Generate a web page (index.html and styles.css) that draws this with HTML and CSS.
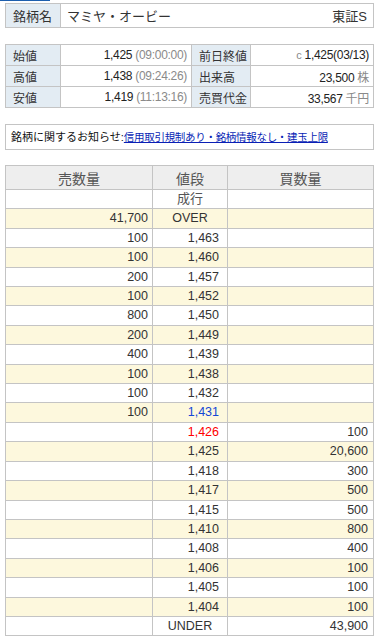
FILE: index.html
```html
<!DOCTYPE html>
<html lang="ja">
<head>
<meta charset="utf-8">
<title>板情報</title>
<link rel="stylesheet" href="styles.css">
</head>
<body>
<div class="page">
  <div class="tabbar"></div>
  <table class="name-table">
    <tr>
      <th class="lbl">銘柄名</th>
      <td class="name">マミヤ・オービー</td>
      <td class="market">東証S</td>
    </tr>
  </table>

  <table class="info-table">
    <tr>
      <th class="lbl">始値</th>
      <td class="val">1,425 <span class="sub">(09:00:00)</span></td>
      <th class="lbl">前日終値</th>
      <td class="val"><span class="sub c">c</span> 1,425(03/13)</td>
    </tr>
    <tr>
      <th class="lbl">高値</th>
      <td class="val">1,438 <span class="sub">(09:24:26)</span></td>
      <th class="lbl">出来高</th>
      <td class="val">23,500 <span class="sub">株</span></td>
    </tr>
    <tr>
      <th class="lbl">安値</th>
      <td class="val">1,419 <span class="sub">(11:13:16)</span></td>
      <th class="lbl">売買代金</th>
      <td class="val">33,567 <span class="sub">千円</span></td>
    </tr>
  </table>

  <div class="notice">銘柄に関するお知らせ:<a href="#" class="notice-link">信用取引規制あり・銘柄情報なし・建玉上限</a></div>

  <table class="board">
    <thead>
      <tr><th class="c-sell">売数量</th><th class="c-price">値段</th><th class="c-buy">買数量</th></tr>
    </thead>
    <tbody>
      <tr><td></td><td class="ctr gray">成行</td><td></td></tr>
      <tr class="y"><td>41,700</td><td class="ctr">OVER</td><td></td></tr>
      <tr><td>100</td><td>1,463</td><td></td></tr>
      <tr class="y"><td>100</td><td>1,460</td><td></td></tr>
      <tr><td>200</td><td>1,457</td><td></td></tr>
      <tr class="y"><td>100</td><td>1,452</td><td></td></tr>
      <tr><td>800</td><td>1,450</td><td></td></tr>
      <tr class="y"><td>200</td><td>1,449</td><td></td></tr>
      <tr><td>400</td><td>1,439</td><td></td></tr>
      <tr class="y"><td>100</td><td>1,438</td><td></td></tr>
      <tr><td>100</td><td>1,432</td><td></td></tr>
      <tr class="y"><td>100</td><td class="blue">1,431</td><td></td></tr>
      <tr><td></td><td class="red">1,426</td><td>100</td></tr>
      <tr class="y"><td></td><td>1,425</td><td>20,600</td></tr>
      <tr><td></td><td>1,418</td><td>300</td></tr>
      <tr class="y"><td></td><td>1,417</td><td>500</td></tr>
      <tr><td></td><td>1,415</td><td>500</td></tr>
      <tr class="y"><td></td><td>1,410</td><td>800</td></tr>
      <tr><td></td><td>1,408</td><td>400</td></tr>
      <tr class="y"><td></td><td>1,406</td><td>100</td></tr>
      <tr><td></td><td>1,405</td><td>100</td></tr>
      <tr class="y"><td></td><td>1,404</td><td>100</td></tr>
      <tr><td></td><td class="ctr">UNDER</td><td>43,900</td></tr>
    </tbody>
  </table>
</div>
</body>
</html>
```

FILE: styles.css
```css
html, body {
  margin: 0;
  padding: 0;
  background: #ffffff;
}
body {
  font-family: "Liberation Sans", "Noto Sans CJK JP", sans-serif;
  color: #333333;
  font-size: 12px;
}
.page {
  width: 369px;
  padding: 0 5px;
}
.tabbar {
  width: 50px;
  height: 1px;
  margin-left: -5px;
  margin-bottom: 2px;
  background: #1d5fae;
}
table {
  border-collapse: collapse;
  width: 369px;
  table-layout: fixed;
}
.lbl {
  background: #e3ecf3;
  font-weight: normal;
  text-align: left;
  color: #333;
  border: 1px solid #c4c4c4;
  padding: 0 0 0 7px;
}
.name-table td, .name-table th {
  height: 23px;
  padding-top: 0;
  padding-bottom: 0;
  font-size: 13px;
  border: 1px solid #c4c4c4;
}
.name-table .lbl { width: 47px; }
.name-table .name {
  border-right: none;
  padding-left: 6px;
  white-space: nowrap;
}
.name-table .market {
  border-left: none;
  text-align: right;
  padding-right: 6px;
  width: 60px;
}
.info-table {
  margin-top: 16px;
}
.info-table th, .info-table td {
  height: 20px;
  padding-top: 0;
  padding-bottom: 0;
  font-size: 12px;
  border: 1px solid #c4c4c4;
}
.info-table .val {
  text-align: right;
  padding-right: 4px;
  white-space: nowrap;
  color: #222;
  letter-spacing: -0.3px;
}
.info-table tr > :nth-child(1) { width: 47px; }
.info-table tr > :nth-child(2) { width: 125px; }
.info-table tr > :nth-child(3) { width: 51px; }
.sub { color: #8a8a8a; }
.c { font-size: 11px; }
.notice {
  margin-top: 16px;
  border: 1px solid #c4c4c4;
  height: 24px;
  line-height: 24px;
  padding-left: 5px;
  font-size: 11px;
  color: #111;
  white-space: nowrap;
}
.notice-link {
  color: #0a1fb5;
  text-decoration: underline;
  font-size: 10.5px;
  letter-spacing: -0.3px;
}
.board {
  margin-top: 15px;
}
.board th {
  background: #eeeeee;
  font-weight: normal;
  color: #555;
  font-size: 14px;
  height: 23px;
  padding: 0;
  border: 1px solid #c4c4c4;
}
.board .c-sell { width: 146px; }
.board .c-price { width: 74px; }
.board td {
  border: 1px solid #c4c4c4;
  height: 18.4px;
  line-height: 18.4px;
  padding: 0 5px 0 0;
  text-align: right;
  font-size: 12.5px;
  color: #333;
  white-space: nowrap;
}
.board td:nth-child(2) { padding-right: 8px; }
.board td:first-child { padding-right: 4px; }
.board tr.y td { background: #fdf8dd; }
.board td.ctr { text-align: center; padding-right: 0; }
.board td.gray { color: #555; font-size: 13px; }
.board td.blue { color: #1447d6; }
.board td.red { color: #ff0000; }
```
